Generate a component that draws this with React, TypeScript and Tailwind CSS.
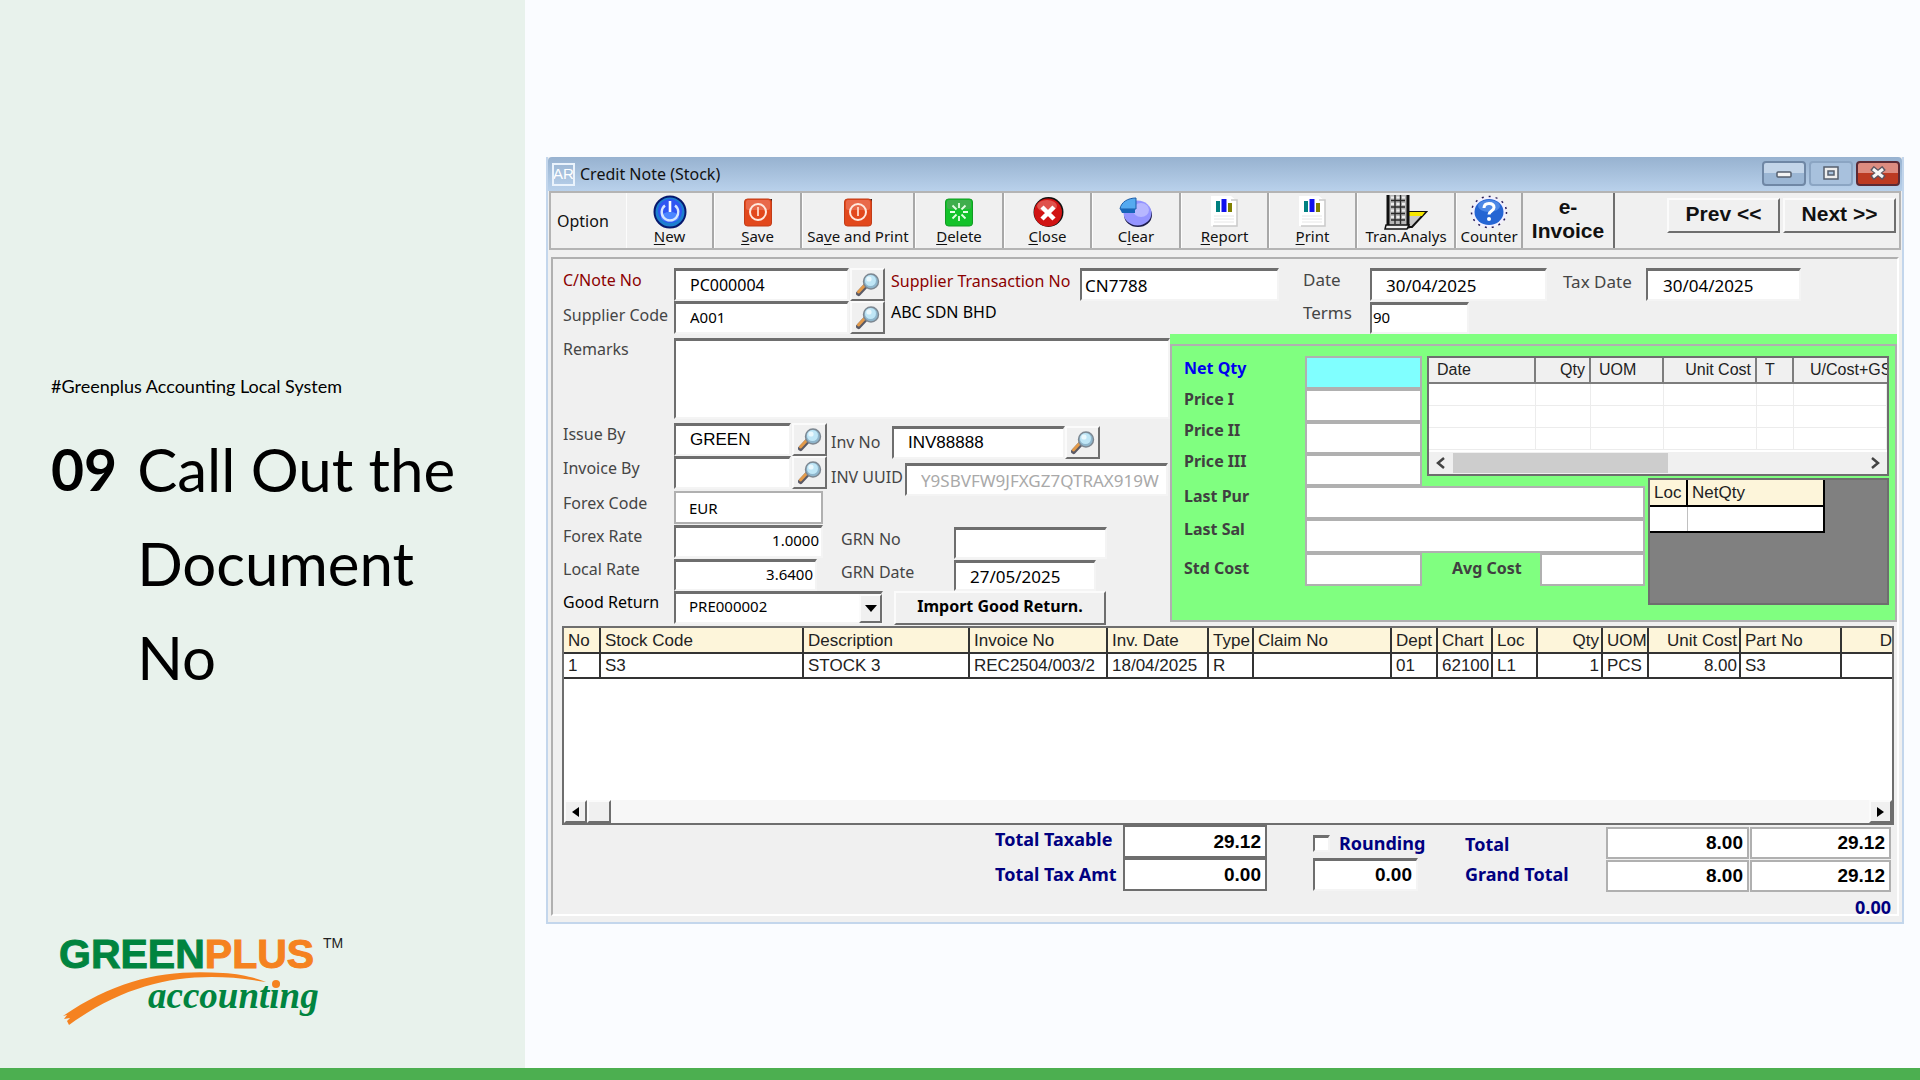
import type { InputHTMLAttributes, ReactNode } from "react";
import clsx from "clsx";

const raised =
  "bg-[#f0f0f0] border-t-2 border-l-2 border-r-2 border-b-2 border-t-[#fbfbfb] border-l-[#fbfbfb] border-r-[#6e6e6e] border-b-[#6e6e6e]";
const sunken =
  "bg-white border-t-3 border-l-2 border-r-2 border-b-2 border-t-[#6e6e6e] border-l-[#6e6e6e] border-r-[#f4f4f4] border-b-[#f4f4f4]";
const flat = "bg-white border-2 border-[#b0b0b0]";

interface FieldProps extends InputHTMLAttributes<HTMLInputElement> {
  look?: string;
}

function Field({ look = sunken, className, ...rest }: FieldProps) {
  return (
    <input
      type="text"
      className={clsx("block min-w-0 shrink-0 outline-none", look, className)}
      {...rest}
    />
  );
}

function Label({
  htmlFor,
  className,
  children,
}: {
  htmlFor: string;
  className?: string;
  children: ReactNode;
}) {
  return (
    <label
      htmlFor={htmlFor}
      className={clsx("block shrink-0 whitespace-nowrap", className)}
    >
      {children}
    </label>
  );
}

function Lookup({ label }: { label: string }) {
  return (
    <button
      type="button"
      aria-label={label}
      className={clsx("flex h-[33px] w-[35px] shrink-0 items-center justify-center", raised)}
    >
      <svg width="24" height="24" viewBox="0 0 24 24">
        <path d="M2.5 20.5 10 12.5" stroke="#5a5a66" strokeWidth="5" strokeLinecap="round" />
        <path d="M2.5 19 9 12" stroke="#e39a4a" strokeWidth="3" strokeLinecap="round" />
        <circle cx="15" cy="8.5" r="7.5" fill="#8fb6cc" stroke="#7d8791" strokeWidth="1.4" />
        <circle cx="14.5" cy="7.5" r="5.5" fill="#bfe6f6" />
        <circle cx="13" cy="6" r="2.6" fill="#eaf8fd" />
      </svg>
    </button>
  );
}

function PowerIcon() {
  return (
    <svg width="34" height="34" viewBox="0 0 34 34">
      <circle cx="17" cy="17" r="15.5" fill="#1d7fd0" stroke="#07186e" strokeWidth="2" />
      <circle cx="17" cy="16" r="12" fill="#2f55f2" />
      <ellipse cx="17" cy="22" rx="9" ry="5" fill="#4b86ff" />
      <path d="M12 10.5a8.3 8.3 0 1 0 10 0" fill="none" stroke="#d7e6ff" strokeWidth="2.4" />
      <path d="M17 6v11" stroke="#fff" strokeWidth="2.6" />
    </svg>
  );
}

function SaveIcon() {
  return (
    <svg width="34" height="34" viewBox="0 0 34 34">
      <path d="M27 4h4v4z" fill="#222" />
      <rect x="3.5" y="4" width="27" height="27" rx="3" fill="#e2481c" stroke="#c23c18" />
      <rect x="5" y="5" width="24" height="10" rx="2" fill="#e9694a" />
      <circle cx="17" cy="17" r="8" fill="none" stroke="#ffe9df" strokeWidth="2" />
      <path d="M17 12v9" stroke="#ffc9b4" strokeWidth="2" />
    </svg>
  );
}

function DeleteIcon() {
  return (
    <svg width="34" height="34" viewBox="0 0 34 34">
      <rect x="3.5" y="4" width="27" height="27" rx="3" fill="#13c22a" stroke="#129a24" />
      <rect x="5" y="5" width="24" height="9" rx="2" fill="#3fae4c" />
      <path
        d="M17 8v5M17 21v5M8 17h5M21 17h5M10.5 10.5l4 4M19.5 19.5l4 4M23.5 10.5l-4 4M14.5 19.5l-4 4"
        stroke="#e4ffe4"
        strokeWidth="1.8"
      />
    </svg>
  );
}

function CloseIcon() {
  return (
    <svg width="34" height="34" viewBox="0 0 34 34">
      <circle cx="17.5" cy="17" r="15" fill="#111" />
      <circle cx="17" cy="17.5" r="14" fill="#d11313" />
      <ellipse cx="16" cy="11" rx="10" ry="6" fill="#e0524c" />
      <path d="m11 12 12 12M23 12 11 24" stroke="#fff" strokeWidth="4.5" />
    </svg>
  );
}

function PieIcon() {
  return (
    <svg width="34" height="34" viewBox="0 0 34 34">
      <ellipse cx="19" cy="20" rx="14" ry="12" fill="#1b1b4a" />
      <ellipse cx="18.5" cy="18" rx="14" ry="12.5" fill="#9494ff" />
      <ellipse cx="22" cy="15" rx="8" ry="7" fill="#b7b7ff" />
      <path d="M1 14C2 7 9 3 17 3v11z" fill="#55aaf0" stroke="#1c5da8" />
      <path d="M1 14h15v4H3z" fill="#1765b8" />
    </svg>
  );
}

function ReportIcon() {
  return (
    <svg width="34" height="34" viewBox="0 0 34 34">
      <path d="M3 1h20l6 5v25H3z" fill="#fff" />
      <path d="M23 5h6v26H5" fill="none" stroke="#c9c9c9" strokeWidth="1.5" />
      <path d="M10 6v11" stroke="#008080" strokeWidth="4" />
      <path d="M16 4v13" stroke="#1010ee" strokeWidth="5" />
      <path d="M22 8v9" stroke="#808000" strokeWidth="4" />
      <path d="M6 21h20M6 24h20M6 27h20" stroke="#e6e6e6" />
    </svg>
  );
}

function AnalysisIcon() {
  return (
    <svg width="44" height="36" viewBox="0 0 44 36">
      <path d="M22 17h20L28 32H16z" fill="#c9c9c9" stroke="#111" strokeWidth="2" />
      <path d="M24 17h17l-3 4H24z" fill="#f7e800" />
      <path d="M4 0v32h20V0" fill="#b5b5b5" stroke="#111" strokeWidth="3" />
      <path d="M7 5.5h14M7 12h14M7 18.500h14M7 25h14M11 0v29M16.500 0v29" stroke="#2a2a2a" strokeWidth="1.4" />
      <path
        d="M7 2.500h3M12.500 2.500h3M18 2.500h3M7 9h3M12.500 9h3M18 9h3M7 15.500h3M12.500 15.500h3M18 15.500h3M7 22h3M12.500 22h3M18 22h3"
        stroke="#eee"
        strokeWidth="2"
      />
      <path d="M2 30h23l-2 4H1z" fill="#eee" stroke="#111" strokeWidth="1.5" />
    </svg>
  );
}

function HelpIcon() {
  return (
    <svg width="38" height="34" viewBox="0 0 38 34">
      <ellipse cx="19" cy="17" rx="17.5" ry="15.5" fill="#f2f0ff" stroke="#2b1e58" strokeWidth="1.5" strokeDasharray="2 5" />
      <ellipse cx="19" cy="17" rx="14.5" ry="13" fill="#2565d3" />
      <ellipse cx="19" cy="11" rx="11" ry="6" fill="#4d88e6" />
      <path d="M14 13c0-3 2-4.500 5-4.500s5 1.500 5 4c0 3.500-5 3.500-5 7" fill="none" stroke="#fff" strokeWidth="3" />
      <circle cx="19" cy="24" r="2" fill="#fff" />
    </svg>
  );
}

const tools: { pre: string; key: string; post: string; icon: ReactNode; width: string }[] = [
  { pre: "", key: "N", post: "ew", icon: <PowerIcon />, width: "w-[88px]" },
  { pre: "", key: "S", post: "ave", icon: <SaveIcon />, width: "w-[88px]" },
  { pre: "Sa", key: "v", post: "e and Print", icon: <SaveIcon />, width: "w-[113px]" },
  { pre: "", key: "D", post: "elete", icon: <DeleteIcon />, width: "w-[89px]" },
  { pre: "", key: "C", post: "lose", icon: <CloseIcon />, width: "w-[88px]" },
  { pre: "C", key: "l", post: "ear", icon: <PieIcon />, width: "w-[89px]" },
  { pre: "", key: "R", post: "eport", icon: <ReportIcon />, width: "w-[88px]" },
  { pre: "", key: "P", post: "rint", icon: <ReportIcon />, width: "w-[88px]" },
  { pre: "Tran.Analys", key: "", post: "", icon: <AnalysisIcon />, width: "w-[99px]" },
  { pre: "Counter", key: "", post: "", icon: <HelpIcon />, width: "w-[67px]" },
];

function Toolbar() {
  const nav =
    "h-[35px] w-[113px] whitespace-nowrap pb-1 text-[21px] leading-none font-bold";
  return (
    <div className="flex h-[59px] border-2 border-[#b4b4b4] bg-[#f0f0f0] font-['Liberation_Sans',sans-serif]">
      <span className="flex w-[75px] shrink-0 items-center pl-[6px] font-['Noto_Sans',sans-serif] text-base">
        Option
      </span>
      {tools.map((t) => (
        <button
          key={t.pre + t.key + t.post}
          type="button"
          className={clsx(
            "flex shrink-0 flex-col items-center border-r-2 border-l border-r-[#a8a8a8] border-l-[#fcfcfc] pt-[2px] font-['Noto_Sans',sans-serif] text-[15px] leading-[18px] whitespace-nowrap",
            t.width
          )}
        >
          <span className="flex h-8 items-start justify-center">{t.icon}</span>
          <span className="relative">
            {t.pre}
            <u className="underline-offset-2">{t.key}</u>
            {t.post}
          </span>
        </button>
      ))}
      <button
        type="button"
        className="w-[92px] shrink-0 border-r-2 border-[#6e6e6e] pb-1 text-[21px] leading-[24px] font-bold"
      >
        e-
        <br />
        Invoice
      </button>
      <div className="ml-auto flex gap-[3px] pt-[5px] pr-[3px]">
        <button type="button" className={clsx(nav, raised)}>
          Prev &lt;&lt;
        </button>
        <button type="button" className={clsx(nav, raised)}>
          Next &gt;&gt;
        </button>
      </div>
    </div>
  );
}

function TitleBar() {
  const box = "flex h-[25px] w-[44px] items-center justify-center rounded-sm border-2";
  return (
    <header className="flex h-[34px] items-center rounded-t bg-linear-to-b from-[#97b2d0] to-[#b9d1eb] pr-[2px] pl-1 font-['Noto_Sans',sans-serif]">
      <span className="flex size-[23px] items-center justify-center overflow-hidden border-2 border-[#eaf3fc] font-['Liberation_Sans',sans-serif] text-[15px] text-white">
        AR
      </span>
      <h2 className="pl-[5px] text-base">Credit Note (Stock)</h2>
      <div className="ml-auto flex gap-[3px] pb-[2px]">
        <button type="button" aria-label="Minimize" className={clsx(box, "border-[#6f87a5] bg-linear-to-b from-[#c3d5e9] from-50% to-[#9bb6d4] to-50%")}>
          <svg width="16" height="8" viewBox="0 0 16 8" className="mt-1">
            <rect x="1" y="1" width="14" height="5" rx="1" fill="#f4f4f4" stroke="#555f6e" strokeWidth="1.5" />
          </svg>
        </button>
        <button type="button" aria-label="Maximize" className={clsx(box, "border-[#8ba5c3] bg-[#a8c1dd]")}>
          <svg width="16" height="14" viewBox="0 0 16 14">
            <rect x="1" y="1" width="14" height="12" fill="#eee" stroke="#555f6e" strokeWidth="1.5" />
            <rect x="5" y="5" width="6" height="4" fill="#a8c1dd" stroke="#555f6e" strokeWidth="1.5" />
          </svg>
        </button>
        <button type="button" aria-label="Close window" className={clsx(box, "border-[#5b2a35] bg-linear-to-b from-[#dd8c80] from-50% to-[#bc3a22] to-50%")}>
          <svg width="18" height="14" viewBox="0 0 18 14">
            <path d="m3 2 12 10M15 2 3 12" stroke="#5a5560" strokeWidth="5.5" />
            <path d="m4 3 10 8M14 3 4 11" stroke="#f6f6f6" strokeWidth="3" />
          </svg>
        </button>
      </div>
    </header>
  );
}

function DocumentHeader() {
  return (
    <div className="flex h-[75px] pt-[9px] pl-[10px]">
      <div className="w-[111px] shrink-0 text-base">
        <Label htmlFor="cnote" className="h-[34px] leading-[24px] text-[#8b0000]">
          C/Note No
        </Label>
        <Label htmlFor="supplier" className="leading-[26px]">
          Supplier Code
        </Label>
      </div>
      <div className="w-[175px] shrink-0 text-base text-black">
        <Field id="cnote" defaultValue="PC000004" className="h-[33px] w-full pl-[14px]" />
        <Field id="supplier" defaultValue="A001" className="h-[33px] w-full pb-[3px] pl-[14px] text-[15px]" />
      </div>
      <div className="w-[42px] shrink-0 pl-px">
        <Lookup label="Find credit note" />
        <Lookup label="Find supplier" />
      </div>
      <div className="w-[189px] shrink-0 text-base">
        <Label htmlFor="transaction" className="h-[30px] leading-[26px] text-[#8b0000]">
          Supplier Transaction No
        </Label>
        <p className="leading-[28px] text-black">ABC SDN BHD</p>
      </div>
      <Field id="transaction" defaultValue="CN7788" className="h-[33px] w-[199px] pl-[3px] text-[17px] text-black" />
      <div className="w-[91px] shrink-0 pl-6 text-[17px]">
        <Label htmlFor="date" className="h-[33px] leading-[24px]">
          Date
        </Label>
        <Label htmlFor="terms" className="leading-[24px]">
          Terms
        </Label>
      </div>
      <div className="space-y-[1px] text-black">
        <Field id="date" defaultValue="30/04/2025" className="h-[33px] w-[177px] pl-[14px] text-[17px]" />
        <Field id="terms" defaultValue="90" className="h-[32px] w-[99px] pb-1 pl-[1px] text-[15px]" />
      </div>
      <Label htmlFor="tax-date" className="w-[99px] pl-4 text-[17px] leading-[28px]">
        Tax Date
      </Label>
      <Field id="tax-date" defaultValue="30/04/2025" className="h-[33px] w-[155px] pl-[15px] text-[17px] text-black" />
    </div>
  );
}

function EntryForm() {
  return (
    <div className="w-[617px] shrink-0 pt-1 pl-[10px] text-base">
      <div className="flex">
        <Label htmlFor="remarks" className="w-[111px] leading-[22px]">
          Remarks
        </Label>
        <textarea
          id="remarks"
          className={clsx("block h-[81px] flex-1 resize-none outline-none", sunken)}
        />
      </div>

      <div className="flex h-[72px] pt-1">
        <div className="w-[111px] shrink-0">
          <Label htmlFor="issue" className="h-[33px] leading-[22px]">
            Issue By
          </Label>
          <Label htmlFor="invoice" className="leading-[24px]">
            Invoice By
          </Label>
        </div>
        <div className="w-[118px] shrink-0 font-['Liberation_Sans',sans-serif] text-[17px] text-black">
          <Field id="issue" defaultValue="GREEN" className="h-[33px] w-[117px] pl-[14px]" />
          <Field id="invoice" className="h-[33px] w-[117px] pl-[14px]" />
        </div>
        <div className="w-[39px] shrink-0">
          <Lookup label="Find issuer" />
          <Lookup label="Find invoicer" />
        </div>
        <div className="min-w-0 flex-1 pt-[3px]">
          <div className="flex">
            <Label htmlFor="inv-no" className="w-[61px] leading-[32px]">
              Inv No
            </Label>
            <Field id="inv-no" defaultValue="INV88888" className="h-[33px] w-[173px] pl-[14px] font-['Liberation_Sans',sans-serif] text-[17px] text-black" />
            <Lookup label="Find invoice" />
          </div>
          <div className="flex pt-1">
            <Label htmlFor="uuid" className="w-[74px] leading-[28px]">
              INV UUID
            </Label>
            <Field
              id="uuid"
              disabled
              defaultValue="Y9SBVFW9JFXGZ7QTRAX919W"
              className="h-[33px] w-[263px] pl-[14px] font-['Noto_Sans',sans-serif] text-[17px] text-[#a9a9a9]"
            />
          </div>
        </div>
      </div>

      <div className="flex">
        <div className="w-[111px] shrink-0">
          <Label htmlFor="forex" className="h-[33px] leading-[24px]">
            Forex Code
          </Label>
          <Label htmlFor="rate" className="h-[33px] leading-[24px]">
            Forex Rate
          </Label>
          <Label htmlFor="local" className="h-[33px] leading-[24px]">
            Local Rate
          </Label>
        </div>
        <div className="w-[167px] shrink-0 space-y-[1px] text-[15px] text-black">
          <Field id="forex" look={flat} defaultValue="EUR" className="h-[33px] w-[149px] pl-[13px]" />
          <Field id="rate" defaultValue="1.0000" className="h-[33px] w-[149px] pr-[2px] pb-1 text-right" />
          <Field id="local" defaultValue="3.6400" className="h-[32px] w-[143px] pr-[2px] pb-1 text-right" />
        </div>
        <div className="w-[113px] shrink-0 pt-9">
          <Label htmlFor="grn" className="h-[33px] leading-[24px]">
            GRN No
          </Label>
          <Label htmlFor="grn-date" className="leading-[24px]">
            GRN Date
          </Label>
        </div>
        <div className="space-y-[1px] pt-9 text-black">
          <Field id="grn" className="h-[32px] w-[153px]" />
          <Field id="grn-date" defaultValue="27/05/2025" className="h-[31px] w-[142px] pl-[14px] text-[17px]" />
        </div>
      </div>

      <div className="flex">
        <Label htmlFor="good-return" className="w-[111px] leading-[22px] text-black">
          Good Return
        </Label>
        <div className="relative w-[209px] shrink-0">
          <select
            id="good-return"
            className={clsx("block h-[33px] w-full appearance-none pb-1 pl-[13px] text-[15px] text-black outline-none", sunken)}
          >
            <option>PRE000002</option>
          </select>
          <span className={clsx("pointer-events-none absolute top-[3px] right-[1px] flex h-[29px] w-[23px] items-center justify-center", raised)}>
            <svg width="12" height="7" viewBox="0 0 12 7">
              <path d="M0 0h12L6 7z" />
            </svg>
          </span>
        </div>
        <button
          type="button"
          className={clsx("ml-[11px] h-[34px] w-[212px] pb-1 text-base leading-none font-bold whitespace-nowrap text-black", raised)}
        >
          Import Good Return.
        </button>
      </div>
    </div>
  );
}

const prices = [
  { id: "net-qty", text: "Net Qty", color: "text-[#0000f0]", box: "h-[33px] bg-[#80ffff]" },
  { id: "price-1", text: "Price I", color: "text-[#404040]", box: "h-[33px] bg-white" },
  { id: "price-2", text: "Price II", color: "text-[#404040]", box: "h-[32px] bg-white" },
  { id: "price-3", text: "Price III", color: "text-[#404040]", box: "h-[32px] bg-white" },
];

const priceBox = "border-2 border-[#b0b0b0]";

function HistoryTable() {
  return (
    <div className="flex h-[120px] flex-col overflow-hidden border-2 border-[#6e6e6e] bg-white">
      <table className="w-full table-fixed border-collapse font-['Liberation_Sans',sans-serif] text-base text-[#222]">
        <colgroup>
          <col className="w-[106px]" />
          <col className="w-[55px]" />
          <col className="w-[73px]" />
          <col className="w-[93px]" />
          <col className="w-[37px]" />
          <col />
        </colgroup>
        <thead>
          <tr className="h-[25px] bg-[#f0f0f0] text-left leading-[22px] *:border-r-2 *:border-b-2 *:border-[#7d7d7d] *:p-0 *:font-normal">
            <th className="pl-2!">Date</th>
            <th className="pr-1! text-right">Qty</th>
            <th className="pl-2!">UOM</th>
            <th className="pr-1! text-right">Unit Cost</th>
            <th className="pl-2!">T</th>
            <th className="overflow-hidden border-r-0! pl-4! whitespace-nowrap">U/Cost+GST</th>
          </tr>
        </thead>
        <tbody>
          {[0, 1, 2].map((row) => (
            <tr key={row} className="h-[22px] *:border-r *:border-b *:border-[#ececec] *:p-0">
              <td />
              <td />
              <td />
              <td />
              <td />
              <td />
            </tr>
          ))}
        </tbody>
      </table>
      <div className="mt-auto flex h-[22px] items-center bg-[#f0f0f0]">
        <button type="button" aria-label="Scroll left" className="flex w-[24px] justify-center">
          <svg width="10" height="12" viewBox="0 0 10 12">
            <path d="M8 1 2 6l6 5" fill="none" stroke="#444" strokeWidth="2.5" />
          </svg>
        </button>
        <span className="h-[20px] w-[47%] bg-[#cdcdcd]" />
        <button type="button" aria-label="Scroll right" className="ml-auto flex w-[24px] justify-center">
          <svg width="10" height="12" viewBox="0 0 10 12">
            <path d="m2 1 6 5-6 5" fill="none" stroke="#444" strokeWidth="2.5" />
          </svg>
        </button>
      </div>
    </div>
  );
}

function PricePanel() {
  return (
    <section className="min-w-0 flex-1 self-start bg-[#80ff80] pt-[10px] text-base font-bold text-[#404040]">
      <div className="h-[278px] border-2 border-[#b0b0b0] pt-[10px]">
        <div className="flex pr-[6px] pl-3">
          <div className="w-[459px] shrink-0">
            <div className="flex">
              <div className="w-[121px] shrink-0">
                {prices.map((p) => (
                  <Label key={p.id} htmlFor={p.id} className={clsx("h-[31px] leading-[24px]", p.color)}>
                    {p.text}
                  </Label>
                ))}
              </div>
              <div className="w-[117px] shrink-0">
                {prices.map((p) => (
                  <Field key={p.id} id={p.id} look={clsx(priceBox, p.box)} className="w-full" />
                ))}
              </div>
            </div>
            <div className="flex">
              <Label htmlFor="last-pur" className="w-[121px] leading-[20px]">
                Last Pur
              </Label>
              <Field id="last-pur" look={flat} className="h-[33px] w-[340px]" />
            </div>
            <div className="flex">
              <Label htmlFor="last-sal" className="w-[121px] leading-[20px]">
                Last Sal
              </Label>
              <Field id="last-sal" look={flat} className="h-[34px] w-[340px]" />
            </div>
            <div className="flex">
              <Label htmlFor="std-cost" className="w-[121px] leading-[30px]">
                Std Cost
              </Label>
              <Field id="std-cost" look={flat} className="h-[33px] w-[117px]" />
              <Label htmlFor="avg-cost" className="w-[118px] pl-[30px] leading-[30px]">
                Avg Cost
              </Label>
              <Field id="avg-cost" look={flat} className="h-[33px] w-[105px]" />
            </div>
          </div>
          <div className="-ml-[216px] flex min-w-0 flex-1 flex-col">
            <HistoryTable />
            <div className="mt-[2px] ml-[221px] h-[127px] border-2 border-[#6e6e6e] bg-[#808080]">
              <table className="w-[175px] table-fixed border-r-2 border-b-2 border-black bg-white text-left font-['Liberation_Sans',sans-serif] text-[17px] leading-none text-[#222]">
                <colgroup>
                  <col className="w-[37px]" />
                  <col />
                </colgroup>
                <thead>
                  <tr className="h-[26px] bg-[#fdf5da] *:border-b-2 *:border-black *:p-0 *:font-normal">
                    <th className="border-r-2 pl-1!">Loc</th>
                    <th className="pl-1!">NetQty</th>
                  </tr>
                </thead>
                <tbody>
                  <tr className="h-[26px]">
                    <td className="border-r border-[#c0c0c0]" />
                    <td />
                  </tr>
                </tbody>
              </table>
            </div>
          </div>
        </div>
      </div>
    </section>
  );
}

const columns = [
  { name: "No", value: "1", width: "w-[36px]" },
  { name: "Stock Code", value: "S3", width: "w-[203px]" },
  { name: "Description", value: "STOCK 3", width: "w-[166px]" },
  { name: "Invoice No", value: "REC2504/003/2", width: "w-[138px]" },
  { name: "Inv. Date", value: "18/04/2025", width: "w-[101px]" },
  { name: "Type", value: "R", width: "w-[45px]" },
  { name: "Claim No", value: "", width: "w-[138px]" },
  { name: "Dept", value: "01", width: "w-[46px]" },
  { name: "Chart", value: "62100", width: "w-[55px]" },
  { name: "Loc", value: "L1", width: "w-[45px]" },
  { name: "Qty", value: "1", width: "w-[65px]", right: true },
  { name: "UOM", value: "PCS", width: "w-[46px]" },
  { name: "Unit Cost", value: "8.00", width: "w-[92px]", right: true },
  { name: "Part No", value: "S3", width: "w-[101px]" },
  { name: "D", value: "", width: "w-auto", right: true },
];

function ItemsTable() {
  return (
    <div className="mt-px mr-[3px] ml-[9px] flex h-[199px] flex-col overflow-hidden border-2 border-[#6e6e6e] bg-white">
      <table className="w-full table-fixed border-collapse font-['Liberation_Sans',sans-serif] text-[17px] leading-none text-[#222]">
        <colgroup>
          {columns.map((c) => (
            <col key={c.name} className={c.width} />
          ))}
        </colgroup>
        <thead>
          <tr className="h-[25px] border-b-2 border-[#333] bg-[#fdf5da]">
            {columns.map((c) => (
              <th
                key={c.name}
                className={clsx(
                  "border-r-2 border-[#333] p-0 px-1 font-normal whitespace-nowrap last:border-r-0 last:pr-0",
                  c.right ? "pr-0.5 text-right" : "text-left"
                )}
              >
                {c.name}
              </th>
            ))}
          </tr>
        </thead>
        <tbody>
          <tr className="h-[25px] border-b-2 border-[#333]">
            {columns.map((c) => (
              <td
                key={c.name}
                className={clsx(
                  "border-r-2 border-[#333] p-0 px-1 whitespace-nowrap last:border-r-0",
                  c.right ? "pr-0.5 text-right" : "text-left"
                )}
              >
                {c.value}
              </td>
            ))}
          </tr>
        </tbody>
      </table>
      <div className="mt-auto flex h-[23px] bg-[#f7f7f7]">
        <button type="button" aria-label="Scroll table left" className={clsx("flex w-[23px] items-center justify-center", raised)}>
          <svg width="7" height="10" viewBox="0 0 7 10">
            <path d="M7 0v10L0 5z" />
          </svg>
        </button>
        <span className={clsx("w-[24px]", raised)} />
        <button type="button" aria-label="Scroll table right" className={clsx("ml-auto flex w-[23px] items-center justify-center", raised)}>
          <svg width="7" height="10" viewBox="0 0 7 10">
            <path d="M0 0v10l7-5z" />
          </svg>
        </button>
      </div>
    </div>
  );
}

function Totals() {
  const amount =
    "text-right font-['Liberation_Sans',sans-serif] text-[19px] font-bold text-black";
  const dark = "bg-white border-2 border-[#6e6e6e]";
  return (
    <div className="flex justify-end pr-[6px] text-[18px] font-bold whitespace-nowrap text-[#000080]">
      <div className="w-[128px] shrink-0">
        <Label htmlFor="taxable" className="h-[35px] leading-[28px]">
          Total Taxable
        </Label>
        <Label htmlFor="tax-amt" className="leading-[28px]">
          Total Tax Amt
        </Label>
      </div>
      <div className="w-[190px] shrink-0">
        <Field id="taxable" look={dark} defaultValue="29.12" className={clsx("h-[33px] w-[144px] pr-1", amount)} />
        <Field id="tax-amt" look={dark} defaultValue="0.00" className={clsx("h-[33px] w-[144px] pr-1", amount)} />
      </div>
      <div className="w-[152px] shrink-0">
        <div className="flex h-[33px] items-center gap-[9px] pt-1">
          <input id="rounding" type="checkbox" className={clsx("size-[17px] appearance-none", sunken)} />
          <Label htmlFor="rounding">Rounding</Label>
        </div>
        <Field aria-label="Rounding amount" defaultValue="0.00" className={clsx("h-[33px] w-[105px] pr-1", amount)} />
      </div>
      <div className="w-[141px] shrink-0 pt-1">
        <Label htmlFor="total" className="h-[30px] leading-[30px]">
          Total
        </Label>
        <Label htmlFor="grand" className="leading-[30px]">
          Grand Total
        </Label>
      </div>
      <div className="pt-[2px]">
        <div className="grid grid-cols-[143px_141px] gap-px">
          <Field id="total" look={flat} defaultValue="8.00" className={clsx("h-[32px] w-full pr-1", amount)} />
          <Field aria-label="Local total" look={flat} defaultValue="29.12" className={clsx("h-[32px] w-full pr-1", amount)} />
          <Field id="grand" look={flat} defaultValue="8.00" className={clsx("h-[32px] w-full pr-1", amount)} />
          <Field aria-label="Local grand total" look={flat} defaultValue="29.12" className={clsx("h-[32px] w-full pr-1", amount)} />
        </div>
        <p className="h-[22px] text-right leading-[30px]">0.00</p>
      </div>
    </div>
  );
}

function CreditNoteWindow() {
  return (
    <section className="mt-[157px] border-r-2 border-b-2 border-l-2 border-[#c3d6ec] bg-[#f0f0f0] font-['Noto_Sans',sans-serif] text-[#111]">
      <TitleBar />
      <div className="px-px pb-[6px]">
        <Toolbar />
        <div className="mx-[2px] mt-[7px] border-2 border-[#b0b0b0] border-r-white border-b-white text-[#454545]">
          <DocumentHeader />
          <div className="flex">
            <EntryForm />
            <PricePanel />
          </div>
          <ItemsTable />
          <Totals />
        </div>
      </div>
    </section>
  );
}

function Logo() {
  return (
    <svg width="300" height="104" viewBox="0 -8 300 104" role="img" aria-label="Greenplus Accounting">
      <text
        x="1"
        y="32"
        fontFamily="Liberation Sans, sans-serif"
        fontWeight="bold"
        fontSize="41"
        fill="#00843f"
        stroke="#00843f"
        strokeWidth="1"
      >
        GREEN
        <tspan fill="#f58220" stroke="#f58220">
          PLUS
        </tspan>
      </text>
      <text x="265" y="12" fontFamily="Liberation Sans, sans-serif" fontSize="14" fill="#222">
        TM
      </text>
      <path
        d="M5 80C60 42 110 33 165 37c18 1 33 5 43 9-70-12-132-4-197 43l-2-4 3-3-6 1 3-4z"
        fill="#f58220"
      />
      <text x="90" y="72" fontFamily="Liberation Serif, serif" fontStyle="italic" fontWeight="bold" fontSize="37" fill="#00843f">
        accounting
      </text>
      <circle cx="218" cy="48" r="4" fill="#f58220" />
    </svg>
  );
}

export default function App() {
  return (
    <div className="flex min-h-screen flex-col bg-[#fafcff]">
      <div className="flex flex-1">
        <aside className="flex w-[525px] shrink-0 flex-col justify-between bg-[#e8f2ec] pt-[372px] pb-9 pl-[51px] font-['Lato',sans-serif] text-black">
          <div>
            <p className="text-[18px] leading-7">#Greenplus Accounting Local System</p>
            <div className="flex gap-5 pt-[22px] text-[60px] leading-[94px]">
              <span className="text-[57px] font-bold">09</span>
              <h1>
                Call Out the
                <br />
                Document
                <br />
                No
              </h1>
            </div>
          </div>
          <div className="pl-[7px]">
            <Logo />
          </div>
        </aside>
        <main className="min-w-0 flex-1 pr-4 pl-[21px]">
          <CreditNoteWindow />
        </main>
      </div>
      <footer className="h-3 bg-[#4caf50]" />
    </div>
  );
}
